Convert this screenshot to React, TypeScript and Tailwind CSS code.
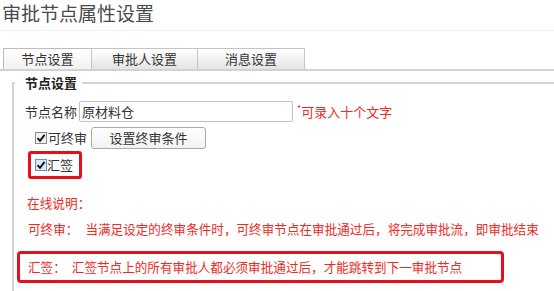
import React from "react"

function Check({ focus = false }: { focus?: boolean }) {
  return (
    <span
      className={
        "flex h-[12px] w-[12px] items-center justify-center border " +
        (focus ? "border-[#6b8fc4] bg-[#dbe8f7]" : "border-[#8a8a8a] bg-[#f0f0f0]")
      }
    >
      <svg width="10" height="10" viewBox="0 0 10 10">
        <path d="M1.5 5.2 L4 7.8 L8.6 1.8" fill="none" stroke="#111" strokeWidth="1.9" />
      </svg>
    </span>
  )
}

export default function App() {
  return (
    <div className="h-[291px] w-[554px] overflow-hidden bg-white font-['Noto_Sans_CJK_SC','Noto_Sans',sans-serif] text-[#333]">
      <div className="h-[31px] border-b border-[#f0f0f0] pl-[2px] text-[19px] leading-[26px] text-[#4a4a4a]">审批节点属性设置</div>

      <div className="mt-[17px] flex h-[23px] border-b-2 border-[#d2d2d2] pl-[3px] text-[13px]">
        <div className="flex w-[89px] items-center justify-center border border-b-0 border-[#bdbdbd] bg-gradient-to-b from-white to-[#f2f2f2]">
          节点设置
        </div>
        <div className="-ml-px flex w-[107px] items-center justify-center border border-b-0 border-[#c4c4c4] bg-gradient-to-b from-white to-[#e4e4e4]">
          审批人设置
        </div>
        <div className="-ml-px flex w-[108px] items-center justify-center border border-b-0 border-[#c4c4c4] bg-gradient-to-b from-white to-[#e4e4e4]">
          消息设置
        </div>
      </div>

      <fieldset className="ml-[12px] mt-[5px] w-[560px] border-2 border-[#d4d4d4] pb-4 pl-[3px]">
        <legend className="-ml-[2px] pl-[10px] pr-[5px] text-[13px] font-bold leading-[14px] text-[#222]">节点设置</legend>

        <div className="mt-[11px] flex h-[21px] items-center pl-[8px] text-[13px]">
          <span>节点名称</span>
          <input
            readOnly
            value="原材料仓"
            className="ml-[2px] h-[21px] w-[214px] rounded-[2px] border border-[#c2c2c2] px-[2px] text-[13px] text-[#333] outline-none"
          />
          <span className="ml-[4px] text-[#ee2a24]">
            <span className="align-top text-[9px]">*</span>可录入十个文字
          </span>
        </div>

        <div className="mt-[5px] flex h-[22px] items-center pl-[18px] text-[13px]">
          <Check />
          <span className="ml-[1px]">可终审</span>
          <button className="ml-[4px] h-[22px] w-[115px] rounded-[3px] border border-[#aaaaaa] bg-gradient-to-b from-white to-[#f2f2f2] text-[13px] text-[#333]">
            设置终审条件
          </button>
        </div>

        <div className="ml-[11px] mt-[2px] flex h-[28px] w-[54px] items-center rounded-[3px] border-[3px] border-[#e5101a] pl-[4px] text-[13px]">
          <Check focus />
          <span>汇签</span>
        </div>

        <div className="mt-[16px] pl-[10px] text-[12.7px] leading-[16px] text-[#ee2a24]">在线说明：</div>

        <div className="mt-[10px] flex pl-[11px] text-[12.6px] leading-[16px] text-[#ee2a24]">
          <span>可终审：</span>
          <span className="ml-[7px]">当满足设定的终审条件时，可终审节点在审批通过后，将完成审批流，即审批结束</span>
        </div>

        <div className="mt-[14px] flex h-[32px] w-[487px] items-center rounded-[4px] border-[3px] border-[#e5101a] pl-[8px] text-[12.6px] text-[#ee2a24]">
          <span>汇签：</span>
          <span className="ml-[6px]">汇签节点上的所有审批人都必须审批通过后，才能跳转到下一审批节点</span>
        </div>
      </fieldset>
    </div>
  )
}
